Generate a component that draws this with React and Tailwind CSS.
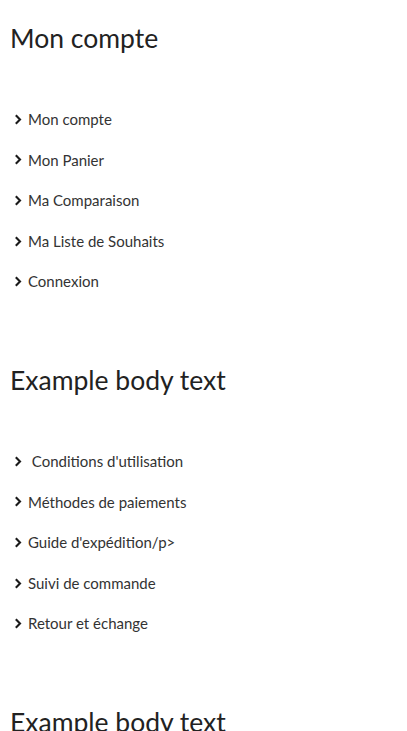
const sections = [
  {
    title: 'Mon compte',
    items: ['Mon compte', 'Mon Panier', 'Ma Comparaison', 'Ma Liste de Souhaits', 'Connexion'],
  },
  {
    title: 'Example body text',
    items: [" Conditions d'utilisation", 'Méthodes de paiements', "Guide d'expédition/p>", 'Suivi de commande', 'Retour et échange'],
  },
  {
    title: 'Example body text',
    items: [],
  },
];

function Chevron() {
  return (
    <svg width="8" height="11" viewBox="0 0 8 11" className="shrink-0">
      <path d="M1.8 1.3 L6 5.5 L1.8 9.7" fill="none" stroke="#1a1a1a" strokeWidth="2.1" />
    </svg>
  );
}

export default function App() {
  return (
    <div className="min-h-screen bg-white pl-[10px] pt-[23px] font-['Lato','Liberation_Sans',sans-serif] text-[#222]">
      {sections.map((s, i) => (
        <div key={i} className="mb-[63px]">
          <h2 className="text-[26.5px] leading-[31px] text-[#222]">{s.title}</h2>
          {s.items.length > 0 && (
            <ul className="mt-[45px] pl-[4px]">
              {s.items.map((item) => (
                <li key={item} className="flex h-[40.6px] items-center gap-[6px] text-[15px] text-[#333]">
                  <Chevron />
                  <span className="whitespace-pre">{item}</span>
                </li>
              ))}
            </ul>
          )}
        </div>
      ))}
    </div>
  );
}
